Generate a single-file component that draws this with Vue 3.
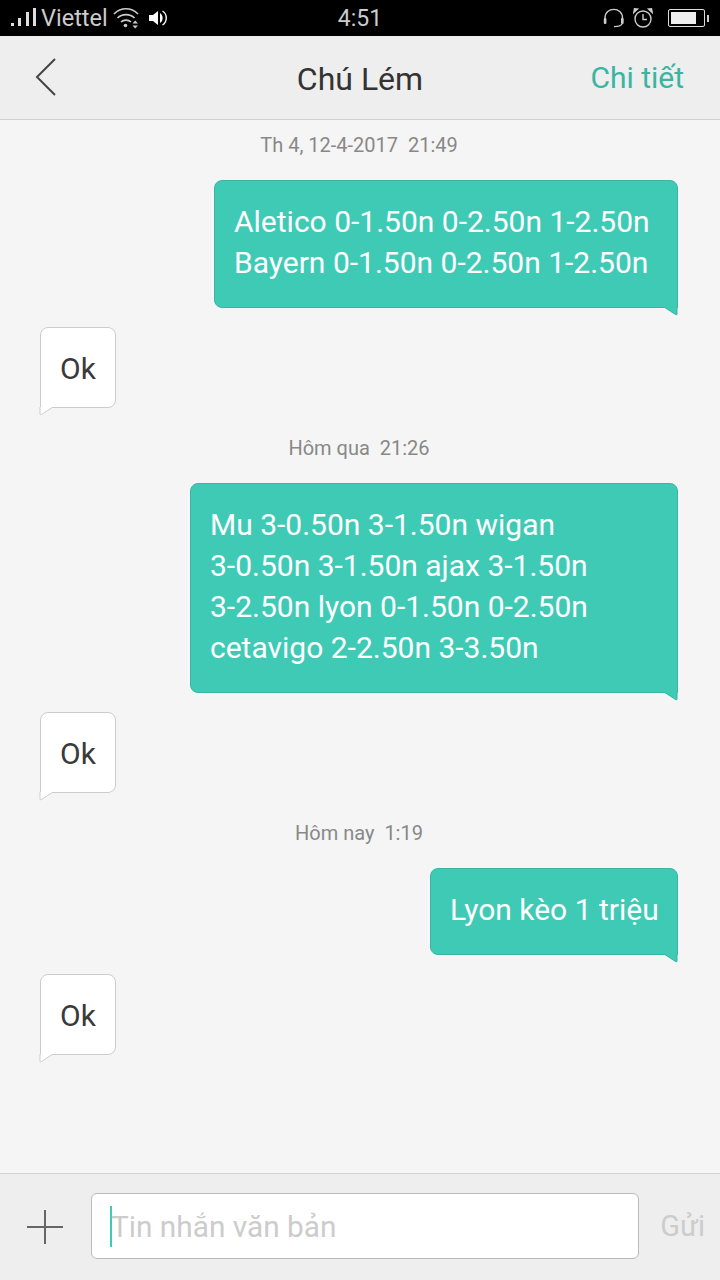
<script setup>
const blocks = [
  {
    time: 'Th 4, 12-4-2017  21:49',
    lines: ['Aletico 0-1.50n 0-2.50n 1-2.50n', 'Bayern 0-1.50n 0-2.50n 1-2.50n'],
    size: 'first',
  },
  {
    time: 'Hôm qua  21:26',
    lines: ['Mu 3-0.50n 3-1.50n wigan', '3-0.50n 3-1.50n ajax 3-1.50n', '3-2.50n lyon 0-1.50n 0-2.50n', 'cetavigo 2-2.50n 3-3.50n'],
    size: 'second',
  },
  {
    time: 'Hôm nay  1:19',
    lines: ['Lyon kèo 1 triệu'],
    size: 'third',
  },
]
</script>

<template>
  <main class="phone">
    <div class="status">
      <div class="status-left">
        <svg class="signal" width="26" height="20" viewBox="0 0 26 20">
          <rect x="0" y="15" width="3" height="3" fill="#ddd" />
          <rect x="7" y="10" width="3" height="8" fill="#ddd" />
          <rect x="15" y="4" width="3" height="14" fill="#ddd" />
          <rect x="22" y="0" width="3" height="18" fill="#ddd" />
        </svg>
        <span class="carrier">Viettel</span>
        <svg class="wifi" width="26" height="22" viewBox="0 0 26 22" fill="none" stroke="#ccc" stroke-width="1.6">
          <path d="M1 7 C8 0 18 0 25 7" />
          <path d="M4.5 11 C9 6.5 17 6.5 21.5 11" />
          <path d="M8 15 C10.5 12.5 15.5 12.5 18 15" />
          <circle cx="12.5" cy="18.5" r="1.8" fill="#ccc" stroke="none" />
          <path d="M19.5 16.5 L25 16.5 L22.2 13.5 Z M19.5 18.5 L25 18.5 L22.2 21.5 Z" fill="#ccc" stroke="none" />
        </svg>
        <svg class="speaker" width="18" height="16" viewBox="0 0 18 16">
          <path d="M0 5 H4 L9 1 V15 L4 11 H0 Z" fill="#fff" />
          <path d="M11 3 C14.5 5 14.5 11 11 13 Z" fill="#fff" />
          <path d="M13.5 1 C18.5 4 18.5 12 13.5 15" fill="none" stroke="#fff" stroke-width="1.4" />
        </svg>
      </div>
      <span class="clock">4:51</span>
      <div class="status-right">
        <svg width="21" height="20" viewBox="0 0 21 20" fill="none" stroke="#ccc" stroke-width="1.4">
          <path d="M2 14 V10 C2 -1.5 19.5 -1.5 19.5 10 V14" />
          <rect x="0.8" y="10" width="2.6" height="6" rx="1" fill="#ccc" stroke="none" />
          <rect x="18" y="10" width="2.6" height="6" rx="1" fill="#ccc" stroke="none" />
          <path d="M19 16 C18 18 15 18.6 11 18.6" />
        </svg>
        <svg class="alarm" width="20" height="20" viewBox="0 0 20 20" fill="none" stroke="#ccc" stroke-width="1.4">
          <circle cx="10" cy="11" r="8" />
          <path d="M10 6 V11.5 H14" />
          <path d="M0.8 4.5 L4.5 1 L1.5 0.8 Z M19.2 4.5 L15.5 1 L18.5 0.8 Z" fill="#ccc" />
        </svg>
        <div class="battery">
          <div class="battery-fill"></div>
        </div>
        <div class="battery-tip"></div>
      </div>
    </div>

    <header class="topbar">
      <svg class="back" width="22" height="38" viewBox="0 0 22 38" fill="none" stroke="#444" stroke-width="2">
        <path d="M20 1 L2 19 L20 37" />
      </svg>
      <h1>Chú Lém</h1>
      <span class="details">Chi tiết</span>
    </header>

    <section class="messages">
      <div v-for="block in blocks" :key="block.time" class="block">
        <div class="time">{{ block.time }}</div>
        <div class="bubble sent" :class="block.size">
          <div v-for="line in block.lines" :key="line">{{ line }}</div>
          <svg class="tail tail-sent" width="14" height="9" viewBox="0 0 14 9">
            <path d="M0 0 L11.5 7.5 Q13 8.5 13 7 V0 Z" fill="#3fcab6" />
            <path d="M0 0 L11.5 7.5 Q13 8.5 13 7 V0" fill="none" stroke="#38b5a3" stroke-width="1" />
          </svg>
        </div>
        <div class="bubble received">
          Ok
          <svg class="tail tail-received" width="14" height="9" viewBox="0 0 14 9">
            <path d="M1 0 V7 Q1 8.5 2.5 7.5 L14 0 Z" fill="#fff" />
            <path d="M1 0 V7 Q1 8.5 2.5 7.5 L14 0" fill="none" stroke="#ccc" stroke-width="1" />
          </svg>
        </div>
      </div>
    </section>

    <footer class="composer">
      <svg class="plus" width="36" height="36" viewBox="0 0 36 36">
        <path d="M0 18 H36 M18 1 V35" stroke="#666" stroke-width="2" />
      </svg>
      <div class="field">
        <span class="caret"></span>
        <span class="placeholder">Tin nhắn văn bản</span>
      </div>
      <span class="send">Gửi</span>
    </footer>
  </main>
</template>

<style scoped>
.phone {
  width: 720px;
  height: 1280px;
  display: flex;
  flex-direction: column;
  background: #f5f5f5;
  font-family: Roboto, "Noto Sans", sans-serif;
  overflow: hidden;
}

.status {
  height: 36px;
  flex: none;
  background: #000;
  color: #ccc;
  display: flex;
  align-items: center;
  justify-content: space-between;
  padding: 0 11px 0 11px;
  position: relative;
}

.status-left,
.status-right {
  display: flex;
  align-items: center;
}

.carrier {
  font-size: 23.5px;
  margin-left: 4px;
}

.wifi {
  margin-left: 5px;
}

.speaker {
  margin-left: 10px;
}

.clock {
  position: absolute;
  left: 0;
  right: 0;
  top: 7px;
  text-align: center;
  font-size: 23px;
  line-height: 24px;
  pointer-events: none;
}

.alarm {
  margin-left: 9px;
}

.battery {
  width: 37px;
  height: 18px;
  margin-left: 15px;
  border: 1px solid #ddd;
  border-radius: 2px;
  padding: 2px;
  box-sizing: border-box;
  margin-right: 1px;
}

.battery-fill {
  width: 25px;
  height: 100%;
  background: #eee;
}

.battery-tip {
  width: 2px;
  height: 7px;
  background: #ccc;
  margin-left: 1px;
}

.topbar {
  height: 84px;
  flex: none;
  box-sizing: border-box;
  background: #eeeeee;
  border-bottom: 1px solid #cfcfcf;
  display: flex;
  align-items: center;
  justify-content: space-between;
  padding: 0 36px 0 35px;
  position: relative;
}

.back {
  margin-bottom: 2px;
}

.topbar h1 {
  position: absolute;
  left: 0;
  right: 0;
  margin: 0;
  padding-top: 2px;
  text-align: center;
  font-size: 32px;
  font-weight: 400;
  color: #333;
}

.details {
  font-size: 30px;
  color: #39b5a1;
}

.messages {
  flex: 1;
  padding: 13px 42px 0 40px;
}

.block {
  display: flex;
  flex-direction: column;
}

.time {
  height: 24px;
  line-height: 24px;
  font-size: 20px;
  color: #888;
  text-align: center;
  white-space: pre;
  margin-bottom: 23px;
}

.bubble {
  position: relative;
  box-sizing: border-box;
  font-size: 30px;
  line-height: 41px;
  border-radius: 8px;
}

.sent {
  align-self: flex-end;
  background: #3fcab6;
  border: 1px solid #38b5a3;
  color: #fff;
  padding: 20px 20px 24px 19px;
  white-space: nowrap;
  margin-bottom: 19px;
  border-bottom-right-radius: 0;
}

.first {
  width: 464px;
}

.second {
  width: 488px;
}

.third {
  width: 248px;
}

.received {
  align-self: flex-start;
  width: 76px;
  height: 81px;
  padding-top: 2px;
  background: #fff;
  border: 1px solid #ccc;
  color: #3a3a3a;
  display: flex;
  align-items: center;
  justify-content: center;
  margin-bottom: 28px;
  border-bottom-left-radius: 0;
}

.tail {
  position: absolute;
  top: 100%;
}

.tail-sent {
  right: -1px;
}

.tail-received {
  left: -2px;
}

.composer {
  height: 107px;
  flex: none;
  box-sizing: border-box;
  background: #eeeeee;
  border-top: 1px solid #d4d4d4;
  display: flex;
  align-items: center;
  padding: 0 15px 2px 27px;
}

.plus {
  flex: none;
  margin-top: 2px;
}

.field {
  width: 549px;
  height: 66px;
  margin-left: 28px;
  box-sizing: border-box;
  background: #fff;
  border: 1px solid #bbb;
  border-radius: 6px;
  display: flex;
  align-items: center;
  padding-left: 18px;
  font-size: 30px;
  color: #ccc;
}

.caret {
  width: 2px;
  height: 41px;
  background: #3fcab6;
  flex: none;
}

.placeholder {
  margin-left: -1px;
  font-size: 29.8px;
}

.send {
  margin-left: 21px;
  font-size: 29px;
  color: #ccc;
}
</style>
